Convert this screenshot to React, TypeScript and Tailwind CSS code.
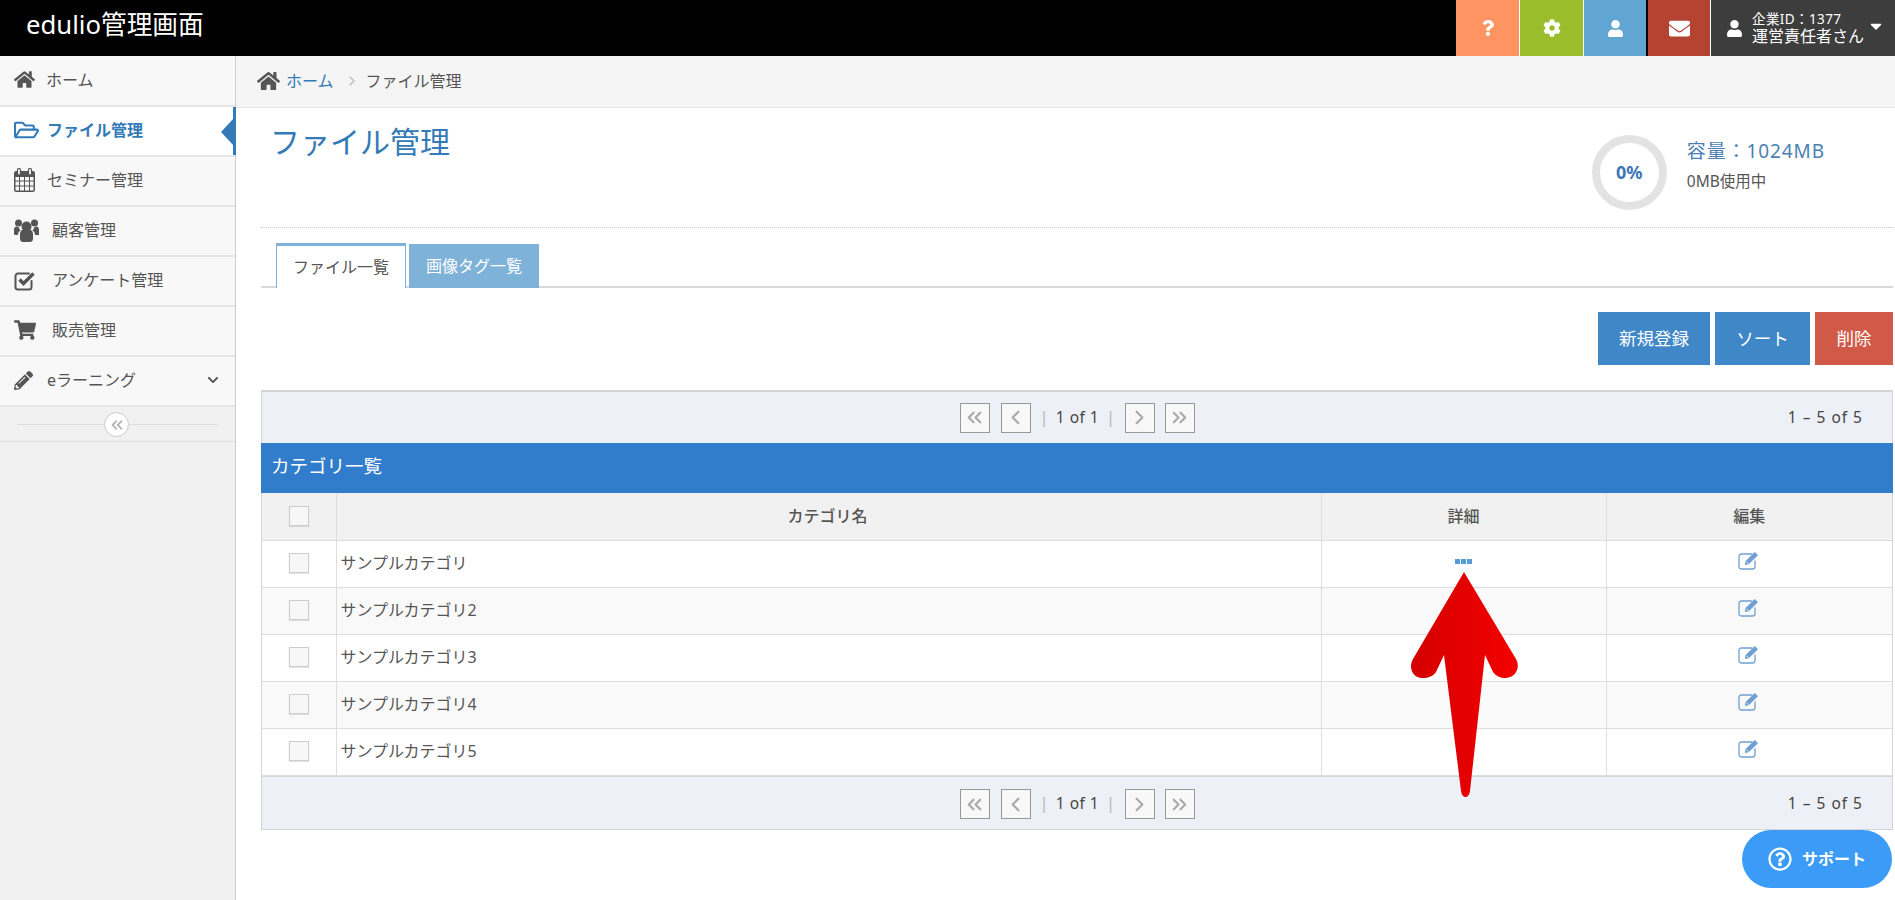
import React from "react";
import {
  FaCaretDown,
  FaChevronDown,
  FaCog,
  FaEnvelope,
  FaHome,
  FaPencilAlt,
  FaQuestion,
  FaRegFolderOpen,
  FaRegQuestionCircle,
  FaShoppingCart,
  FaUser,
} from "react-icons/fa";
import { ChevronLeft, ChevronRight, ChevronsLeft, ChevronsRight } from "lucide-react";

const font = "font-['Noto_Sans','Noto_Sans_CJK_JP',sans-serif]";

const CalendarIcon = () => (
  <svg width="21" height="24" viewBox="0 0 21 24" fill="none" stroke="#555">
    <rect x="0.75" y="3.75" width="19.5" height="19.5" rx="1.5" strokeWidth="1.5" />
    <rect x="1" y="4" width="19" height="5" fill="#555" stroke="none" />
    <path d="M1 13h19M1 18h19M5.5 9v14M10.5 9v14M15.5 9v14" strokeWidth="1" />
    <rect x="3.5" y="0.5" width="3" height="6.5" rx="1.5" fill="#f8f8f8" strokeWidth="1.2" />
    <rect x="14.5" y="0.5" width="3" height="6.5" rx="1.5" fill="#f8f8f8" strokeWidth="1.2" />
  </svg>
);

const UsersIcon = () => (
  <svg width="25" height="23" viewBox="0 0 25 23" fill="#555">
    <circle cx="12.5" cy="7.5" r="5" />
    <circle cx="4.5" cy="4" r="3.5" />
    <circle cx="20.5" cy="4" r="3.5" />
    <path d="M6 15c0-3 2-4.5 3.5-4.5 1 .8 2 1.2 3 1.2s2-.4 3-1.2C17 10.5 19 12 19 15v5c0 2-1.5 3-3 3H9c-1.5 0-3-1-3-3z" />
    <path d="M0 11c0-2 1-3.5 2.5-3.5.7.5 1.5.8 2.3.8.2 1.3.8 2.4 1.7 3.2C5 12.400 4 14 4 16H1.500C.5 16 0 15.300 0 14.500z" />
    <path d="M25 11c0-2-1-3.500-2.500-3.500-.7.5-1.500.8-2.300.8-.2 1.300-.8 2.400-1.700 3.200 1.500.9 2.500 2.500 2.500 4.500h3c1 0 1.500-.7 1.500-1.500z" />
  </svg>
);

const CheckIcon = () => (
  <svg width="22" height="21" viewBox="0 0 22 21" fill="none" stroke="#555">
    <path d="M17.500 11v6a2.500 2.500 0 0 1-2.500 2.500H4A2.500 2.500 0 0 1 1.500 17V6A2.500 2.500 0 0 1 4 3.500h11" strokeWidth="2" strokeLinecap="round" />
    <path d="M5.500 9.500l4 4L19.500 3.500" strokeWidth="3.400" />
  </svg>
);

const EditIcon = () => (
  <svg className="mx-auto mb-[6px]" width="22" height="19" viewBox="0 0 22 19" fill="none">
    <path d="M14 3H3.500A2.500 2.500 0 0 0 1 5.500v10A2.500 2.500 0 0 0 3.500 18h11a2.500 2.500 0 0 0 2.500-2.500V10" stroke="#6f9fd2" strokeWidth="1.300" strokeLinecap="round" />
    <path d="M7.500 10L16.800 1l3.200 3.200-9.300 9-3.800.9z" fill="#6f9fd2" />
    <path d="M8.500 10.700l1.900 1.900" stroke="#fff" strokeWidth="0.8" />
  </svg>
);

const menu = [
  { label: "ホーム", icon: <FaHome className="h-[21px] w-[21px]" />, gap: "w-[46px]", h: "h-[51px]" },
  { label: "ファイル管理", icon: <FaRegFolderOpen className="h-[24px] w-[25px] text-[#337ab7]" />, gap: "w-[47px]", active: true },
  { label: "セミナー管理", icon: <CalendarIcon />, gap: "w-[47px]" },
  { label: "顧客管理", icon: <UsersIcon />, gap: "w-[52px]" },
  { label: "アンケート管理", icon: <CheckIcon />, gap: "w-[52px]" },
  { label: "販売管理", icon: <FaShoppingCart className="h-[20px] w-[22px]" />, gap: "w-[52px]" },
  { label: "eラーニング", icon: <FaPencilAlt className="h-[19px] w-[19px]" />, gap: "w-[47px]", more: true },
];

const rows = ["サンプルカテゴリ", "サンプルカテゴリ2", "サンプルカテゴリ3", "サンプルカテゴリ4", "サンプルカテゴリ5"];

function PageButton({ children }: { children: React.ReactNode }) {
  return (
    <span className="flex h-[30px] w-[30px] items-center justify-center border border-[#999] bg-[#f8f8f8] text-[#aaa]">
      {children}
    </span>
  );
}

function Pager({ className }: { className: string }) {
  return (
    <div className={`grid grid-cols-[1fr_auto_1fr] items-center border-x border-[#d5d5d5] bg-[#edf0f6] ${className}`}>
      <div />
      <div className="flex items-center">
        <PageButton><ChevronsLeft size={23} strokeWidth={2.25} /></PageButton>
        <span className="w-[11px]" />
        <PageButton><ChevronLeft size={23} strokeWidth={2.25} /></PageButton>
        <span className="flex w-[94px] justify-center gap-[7px] text-[15.500px] tracking-[0.5px] text-[#444]">
          <span className="text-[#b5b5b5]">|</span>
          <span>1 of 1</span>
          <span className="text-[#b5b5b5]">|</span>
        </span>
        <PageButton><ChevronRight size={23} strokeWidth={2.25} /></PageButton>
        <span className="w-[10px]" />
        <PageButton><ChevronsRight size={23} strokeWidth={2.25} /></PageButton>
      </div>
      <div className="pr-[29px] text-right text-[15.500px] tracking-[1px] text-[#444]">1 – 5 of 5</div>
    </div>
  );
}

function Checkbox() {
  return <span className="mx-auto mt-[-1px] block h-5 w-5 border border-[#ccc] bg-[#f7f7f7] shadow-[0_1px_1px_rgba(0,0,0,0.1)]" />;
}

export default function App() {
  return (
    <div className={`relative flex h-[900px] w-[1895px] flex-col overflow-hidden bg-white ${font}`}>
      <header className="flex h-[56px] items-stretch bg-black">
        <div className="flex-1 pl-[26px] text-[25.700px] leading-[50px] text-white">edulio管理画面</div>
        <div className="flex w-[64px] items-center justify-center border-r border-white bg-[#fd9461] text-[16px] text-white"><FaQuestion /></div>
        <div className="flex w-[64px] items-center justify-center border-r border-white bg-[#9abd2c] text-[18px] text-white"><FaCog /></div>
        <div className="flex w-[64px] items-center justify-center border-r-2 border-black bg-[#61a5d2] text-[17px] text-white"><FaUser /></div>
        <div className="flex w-[63px] items-center justify-center border-r border-white bg-[#b44332] text-[21px] text-white"><FaEnvelope /></div>
        <div className="flex w-[184px] items-center bg-[#3d3d3d] pl-[15px] text-white">
          <FaUser className="h-[17px] w-[17px]" />
          <div className="ml-[9px] text-[14px] leading-[17px]">
            <div className="text-[13.500px] tracking-[0.4px]">企業ID：1377</div>
            <div className="text-[16px]">運営責任者さん</div>
          </div>
          <FaCaretDown className="mb-[5px] ml-[3px] h-[18px] w-[18px]" />
        </div>
      </header>

      <div className="flex flex-1">
        <aside className="w-[236px] shrink-0 border-r border-[#ccc] bg-[#f1f1f1]">
          {menu.map((m) => (
            <div
              key={m.label}
              className={`relative flex items-center border-b-2 border-[#e6e6e6] pb-[2px] ${m.h ?? "h-[50px]"} ${m.active ? "bg-white font-bold text-[#337ab7]" : "bg-[#f8f8f8] text-[#555]"}`}
            >
              <span className={`flex shrink-0 justify-start pl-[14px] ${m.gap}`}>{m.icon}</span>
              <span className="text-[16px]">{m.label}</span>
              {m.more && <FaChevronDown className="absolute right-[16px] h-3 w-3 text-[#555]" />}
              {m.active && (
                <>
                  <span className="absolute right-[-1px] top-0 h-full w-[3px] bg-[#337ab7]" />
                  <span className="absolute right-[1px] top-[11px] h-0 w-0 border-y-[14px] border-r-[13px] border-y-transparent border-r-[#337ab7]" />
                </>
              )}
            </div>
          ))}
          <div className="relative flex h-[35px] items-center justify-center border-b border-[#ddd] px-[17px]">
            <span className="h-px w-full bg-[#ddd]" />
            <span className="absolute left-[104px] top-[5px] flex h-[25px] w-[25px] items-center justify-center rounded-full border border-[#ccc] bg-white text-[#aaa]">
              <ChevronsLeft size={18} strokeWidth={2.25} />
            </span>
          </div>
        </aside>

        <main className="min-w-0 flex-1">
          <div className="flex h-[52px] items-center border-b border-[#e5e5e5] bg-[#f5f5f5] pb-[2px] pl-[21px] text-[16px]">
            <FaHome className="h-[24px] w-[23px] text-[#555]" />
            <span className="ml-[6px] text-[#337ab7]">ホーム</span>
            <ChevronRight className="ml-[10px] text-[#bbb]" size={16} strokeWidth={2} />
            <span className="ml-[6px] text-[#555]">ファイル管理</span>
          </div>

          <div className="pl-[25px] pr-[2px]">
            <div className="flex h-[120px] border-b border-dotted border-[#ccc]">
              <h1 className="ml-[9px] mt-[12px] flex-1 text-[30px] font-normal leading-[44px] text-[#337ab7]">ファイル管理</h1>
              <div className="mr-[68px] mt-[27px] flex">
                <div className="flex h-[75px] w-[75px] items-center justify-center rounded-full border-[8px] border-[#e3e3e3] text-[18px] font-bold text-[#3f75b5]">0%</div>
                <div className="ml-[20px]">
                  <div className="mt-[1px] text-[19px] leading-[30px] tracking-[0.900px] text-[#4a7fb5]">容量：1024MB</div>
                  <div className="mt-[3px] text-[15.500px] leading-[24px] text-[#555]">0MB使用中</div>
                </div>
              </div>
            </div>

            <div className="mt-[15px] flex h-[45px] items-end border-b-2 border-[#d5d8dc] pl-[15px]">
              <div className="mb-[-2px] flex h-[45px] w-[130px] items-center justify-center border-x border-t-[3px] border-[#7fb2d8] bg-white text-[16px] text-[#555]">ファイル一覧</div>
              <div className="mb-[-2px] ml-[3px] flex h-[44px] w-[130px] items-center justify-center bg-[#7fb2d8] text-[16px] text-white">画像タグ一覧</div>
            </div>

            <div className="mt-[24px] flex justify-end gap-[5px] text-[17.500px] text-white">
              <button className="h-[53px] w-[112px] bg-[#3f87c7]">新規登録</button>
              <button className="h-[53px] w-[95px] bg-[#3f87c7]">ソート</button>
              <button className="h-[53px] w-[78px] bg-[#d05a47]">削除</button>
            </div>

            <div className="mt-[25px]">
              <Pager className="h-[53px] border-t-2" />
              <div className="h-[50px] bg-[#317dcb] pl-[10px] text-[18.500px] leading-[46px] text-white">カテゴリ一覧</div>
              <div className="border-x border-[#d5d5d5]">
                <table className="w-full table-fixed border-collapse text-[16px] text-[#555]">
                  <colgroup>
                    <col className="w-[74px]" />
                    <col />
                    <col className="w-[285px]" />
                    <col className="w-[286px]" />
                  </colgroup>
                  <thead>
                    <tr className="h-[47px] bg-[#f1f1f1] text-[16px] font-medium">
                      <th className="border-b border-r border-[#ddd]"><Checkbox /></th>
                      <th className="border-b border-r border-[#ddd] pr-[2px] font-medium">カテゴリ名</th>
                      <th className="border-b border-r border-[#ddd] font-medium">詳細</th>
                      <th className="border-b border-[#ddd] font-medium">編集</th>
                    </tr>
                  </thead>
                  <tbody>
                    {rows.map((r, i) => (
                      <tr key={r} className={`h-[47px] ${i % 2 ? "bg-[#f9f9f9]" : "bg-white"}`}>
                        <td className="border-b border-r border-[#ddd]"><Checkbox /></td>
                        <td className="border-b border-r border-[#ddd] pb-[2px] pl-[4px]">{r}</td>
                        <td className="border-b border-r border-[#ddd]">
                          {i === 0 && (
                            <div className="mb-[5px] flex justify-center gap-px">
                              <span className="h-[5px] w-[5px] bg-[#5b9bd5]" />
                              <span className="h-[5px] w-[5px] bg-[#5b9bd5]" />
                              <span className="h-[5px] w-[5px] bg-[#5b9bd5]" />
                            </div>
                          )}
                        </td>
                        <td className="border-b border-[#ddd]">
                          <EditIcon />
                        </td>
                      </tr>
                    ))}
                  </tbody>
                </table>
              </div>
              <Pager className="h-[54px] border-y pt-[3px]" />
            </div>
          </div>
        </main>
      </div>

      {/* annotation arrow */}
      <svg className="absolute left-[1405px] top-[560px]" width="120" height="245" viewBox="0 0 120 245">
        <defs>
          <linearGradient id="arrowFill" x1="0" x2="1" y1="0" y2="0">
            <stop offset="0" stopColor="#d40000" />
            <stop offset="1" stopColor="#f40000" />
          </linearGradient>
        </defs>
        <path
          d="M59 12 L111 99 C116 108 110 118 100 118 C95 118 91 116 88 112 L80 95 L65 231 C64 239 57 239 56 231 L39 95 L31 112 C28 116 24 118 17 118 C8 118 3 108 8 99 Z"
          fill="url(#arrowFill)"
        />
      </svg>

      <div className="absolute left-[1742px] top-[830px] flex h-[58px] w-[150px] items-center justify-center gap-[10px] rounded-full bg-[#3c9bf6] text-[16px] font-bold text-white">
        <FaRegQuestionCircle className="h-[24px] w-[24px]" />
        <span>サポート</span>
      </div>
    </div>
  );
}
